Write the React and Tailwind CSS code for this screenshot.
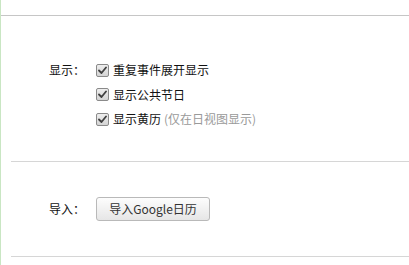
import React from "react";

function Check() {
  return (
    <span className="w-[13px] h-[13px] shrink-0 rounded-[2px] border border-[#8a8a8a] bg-gradient-to-b from-[#eeeeee] to-[#d4d4d4] flex items-center justify-center">
      <svg width="9" height="9" viewBox="0 0 9 9">
        <path d="M1 4.5 L3.5 7 L8 1.5" fill="none" stroke="#404040" strokeWidth="1.8" strokeLinecap="round" strokeLinejoin="round" />
      </svg>
    </span>
  );
}

function Row({ children }) {
  return (
    <div className="h-[24.5px] flex items-center gap-[4px]">
      <Check />
      <span>{children}</span>
    </div>
  );
}

export default function App() {
  return (
    <div
      className="w-[409px] h-[265px] bg-white border-l border-[#c9e6c3] text-[12px] text-[#111] overflow-hidden"
      style={{ fontFamily: '"Noto Sans CJK SC", "Noto Sans", sans-serif' }}
    >
      <div className="h-[15px]" />
      <div className="border-t border-[#c6c6c6]" />
      <div className="pt-[42px] pl-[48px] flex">
        <div className="w-[47px] h-[24.5px] flex items-center">显示：</div>
        <div className="flex flex-col">
          <Row>重复事件展开显示</Row>
          <Row>显示公共节日</Row>
          <Row>
            显示黄历
            <span className="text-[#9a9a9a] ml-[3px]">(仅在日视图显示)</span>
          </Row>
        </div>
      </div>
      <div className="ml-[10px] mt-[29px] border-t border-[#d6d6d6]" />
      <div className="pt-[35px] pl-[48px] flex items-center">
        <div className="w-[47px]">导入：</div>
        <button className="w-[114px] h-[24px] rounded-[3px] border border-[#b9b9b9] bg-gradient-to-b from-[#fdfdfd] to-[#e6e6e6] text-[#333] text-[12px] flex items-center justify-center">
          导入Google日历
        </button>
      </div>
      <div className="ml-[10px] mt-[35px] border-t border-[#d6d6d6]" />
    </div>
  );
}
